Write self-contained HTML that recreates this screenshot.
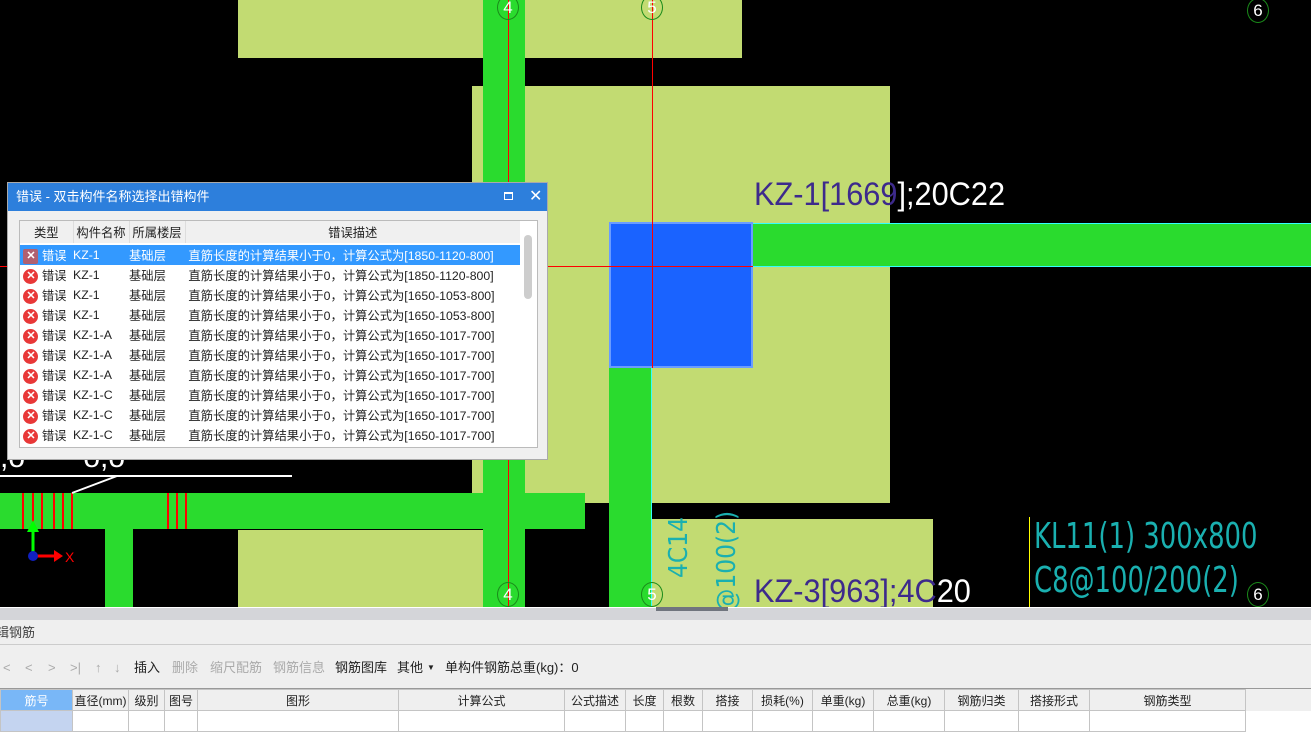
<!DOCTYPE html>
<html><head><meta charset="utf-8"><style>
*{margin:0;padding:0;box-sizing:border-box}
body{width:1311px;height:750px;overflow:hidden;background:#fff;position:relative;font-family:"Liberation Sans","Noto Sans CJK SC",sans-serif;font-size:12px;color:#222}
.a{position:absolute}
.pale{background:#c2db72}
.grn{background:#2adb2e}
.circ{position:absolute;width:22px;height:25px;border:1px solid #1a8a1a;border-radius:50%;color:#fff;font-size:17px;text-align:center;line-height:23px}
.cad{font-family:"DejaVu Sans Condensed","Liberation Sans",sans-serif}
table{border-collapse:collapse}
.dlg td{height:20px;white-space:nowrap;font-size:12.3px;padding:0}
.x{display:inline-block;width:15px;height:15px;border-radius:50%;background:#e83838;color:#fff;font-size:11px;line-height:15px;text-align:center;font-weight:bold;vertical-align:middle}
.bt th,.bt td{border:1px solid #c4c4c4;font-weight:normal;font-size:12px;height:21px}
.bt th{background:#efefef}
.tb{position:absolute;top:0;line-height:46px;font-size:13px;white-space:nowrap}
.g{color:#aaa}
</style></head><body>
<div class="a" style="left:0;top:0;width:1311px;height:607px;background:#000;overflow:hidden">
 <div class="a pale" style="left:238px;top:0;width:504px;height:58px"></div>
 <div class="a pale" style="left:472px;top:86px;width:418px;height:417px"></div>
 <div class="a pale" style="left:652px;top:519px;width:281px;height:88px"></div>
 <div class="a pale" style="left:238px;top:530px;width:245px;height:77px"></div>
 <div class="a grn" style="left:483px;top:0;width:42px;height:607px"></div>
 <div class="a grn" style="left:0;top:493px;width:585px;height:36px"></div>
 <div class="a grn" style="left:105px;top:529px;width:28px;height:78px"></div>
 <div class="a grn" style="left:609px;top:368px;width:43px;height:239px;border-right:1px solid #3ff"></div>
 <div class="a grn" style="left:753px;top:223px;width:558px;height:44px;border-top:1px solid #3ff;border-bottom:1px solid #3ff"></div>
 <div class="a" style="left:609px;top:222px;width:144px;height:146px;background:#1a63ff;border:2px solid #6a9cff"></div>
 <div class="a" style="left:508px;top:0;width:1px;height:607px;background:#f00"></div>
 <div class="a" style="left:652px;top:0;width:1px;height:368px;background:#f00"></div>
 <div class="a" style="left:0;top:266px;width:753px;height:1px;background:#f00"></div>
 <div class="a" style="left:22px;top:493px;width:2px;height:36px;background:#f00"></div>
 <div class="a" style="left:32px;top:493px;width:2px;height:36px;background:#f00"></div>
 <div class="a" style="left:41px;top:493px;width:2px;height:36px;background:#f00"></div>
 <div class="a" style="left:53px;top:493px;width:2px;height:36px;background:#f00"></div>
 <div class="a" style="left:62px;top:493px;width:2px;height:36px;background:#f00"></div>
 <div class="a" style="left:71px;top:493px;width:2px;height:36px;background:#f00"></div>
 <div class="a" style="left:167px;top:493px;width:2px;height:36px;background:#f00"></div>
 <div class="a" style="left:176px;top:493px;width:2px;height:36px;background:#f00"></div>
 <div class="a" style="left:185px;top:493px;width:2px;height:36px;background:#f00"></div>
 <svg class="a" style="left:0;top:440px" width="320" height="140">
  <path d="M0 36H292M117 36L72 53" stroke="#fff" stroke-width="2" fill="none"/>
  <path d="M33 116V88" stroke="#0f0" stroke-width="3"/><path d="M27 92L33 80L39 92Z" fill="#0f0"/>
  <path d="M33 116H56" stroke="#f00" stroke-width="3"/><path d="M54 110L63 116L54 122Z" fill="#f00"/>
  <circle cx="33" cy="116" r="5" fill="#1020c0"/>
  <text x="65" y="122" fill="#f00" font-size="14" font-family="Liberation Sans">X</text>
 </svg>
 <div class="a" style="left:1029px;top:517px;width:1px;height:90px;background:#ff0"></div>
 <div class="a cad" style="left:1034px;top:515px;color:#1ab0b0;font-size:36px;line-height:44px;transform:scaleX(0.8);transform-origin:left;white-space:nowrap;font-weight:200">KL11(1) 300x800<br>C8@100/200(2)</div>
 <div class="a cad" style="left:664px;top:578px;color:#1ab0b0;font-size:26px;transform:rotate(-90deg);transform-origin:left top;white-space:nowrap">4C14</div>
 <div class="a cad" style="left:712px;top:612px;color:#1ab0b0;font-size:26px;transform:rotate(-90deg);transform-origin:left top;white-space:nowrap">@100(2)</div>
 <div class="a" style="left:754px;top:176px;font-size:32px;transform:scaleX(0.96);transform-origin:left;white-space:nowrap;color:#fff"><span style="color:#3d2a8c">KZ-1[1669</span>];20C22</div>
 <div class="a" style="left:754px;top:573px;font-size:32px;transform:scaleX(0.96);transform-origin:left;white-space:nowrap;color:#fff"><span style="color:#3d2a8c">KZ-3[963];4C</span>20</div>
 <div class="circ" style="left:497px;top:-5px">4</div>
 <div class="circ" style="left:641px;top:-5px">5</div>
 <div class="circ" style="left:1247px;top:-2px">6</div>
 <div class="circ" style="left:497px;top:582px">4</div>
 <div class="circ" style="left:641px;top:582px">5</div>
 <div class="circ" style="left:1247px;top:582px">6</div>
 <div class="a" style="left:0;top:443px;font-size:30px;color:#fff;line-height:30px">,o&nbsp;&nbsp;&nbsp;&nbsp;&nbsp;&nbsp;&nbsp;o,o</div>
</div>
<!-- dialog -->
<div class="a" style="left:7px;top:182px;width:541px;height:278px;background:#f0f0f0;border:1px solid #aaa">
 <div style="height:28px;background:#2d7fdc;color:#fff;font-size:13px;line-height:28px;padding-left:8px">错误 - 双击构件名称选择出错构件
  <span class="a" style="left:496px;top:9px;width:9px;height:8px;border:1px solid #fff;border-top-width:2px"></span>
  <span class="a" style="left:521px;top:0;font-size:16px">✕</span></div>
 <div class="a" style="left:11px;top:37px;width:519px;height:228px;background:#fff;border:1px solid #bbb;overflow:hidden">
  <table class="dlg" style="width:500px">
   <tr style="background:#f0f0f0"><td style="width:53px;text-align:center;height:22px;border-right:1px solid #ddd">类型</td><td style="width:56px;text-align:center;border-right:1px solid #ddd">构件名称</td><td style="width:56px;text-align:center;border-right:1px solid #ddd">所属楼层</td><td style="text-align:center">错误描述</td></tr>
   <tr><td colspan="4" style="height:2px"></td></tr>
   <tr style="background:#3399ff;color:#fff"><td>&nbsp;<span class="x" style="background:#b06070;border-radius:2px">✕</span> 错误</td><td>KZ-1</td><td>基础层</td><td>&nbsp;直筋长度的计算结果小于0，计算公式为[1850-1120-800]</td></tr>
   <tr><td>&nbsp;<span class="x">✕</span> 错误</td><td>KZ-1</td><td>基础层</td><td>&nbsp;直筋长度的计算结果小于0，计算公式为[1850-1120-800]</td></tr>
   <tr><td>&nbsp;<span class="x">✕</span> 错误</td><td>KZ-1</td><td>基础层</td><td>&nbsp;直筋长度的计算结果小于0，计算公式为[1650-1053-800]</td></tr>
   <tr><td>&nbsp;<span class="x">✕</span> 错误</td><td>KZ-1</td><td>基础层</td><td>&nbsp;直筋长度的计算结果小于0，计算公式为[1650-1053-800]</td></tr>
   <tr><td>&nbsp;<span class="x">✕</span> 错误</td><td>KZ-1-A</td><td>基础层</td><td>&nbsp;直筋长度的计算结果小于0，计算公式为[1650-1017-700]</td></tr>
   <tr><td>&nbsp;<span class="x">✕</span> 错误</td><td>KZ-1-A</td><td>基础层</td><td>&nbsp;直筋长度的计算结果小于0，计算公式为[1650-1017-700]</td></tr>
   <tr><td>&nbsp;<span class="x">✕</span> 错误</td><td>KZ-1-A</td><td>基础层</td><td>&nbsp;直筋长度的计算结果小于0，计算公式为[1650-1017-700]</td></tr>
   <tr><td>&nbsp;<span class="x">✕</span> 错误</td><td>KZ-1-C</td><td>基础层</td><td>&nbsp;直筋长度的计算结果小于0，计算公式为[1650-1017-700]</td></tr>
   <tr><td>&nbsp;<span class="x">✕</span> 错误</td><td>KZ-1-C</td><td>基础层</td><td>&nbsp;直筋长度的计算结果小于0，计算公式为[1650-1017-700]</td></tr>
   <tr><td>&nbsp;<span class="x">✕</span> 错误</td><td>KZ-1-C</td><td>基础层</td><td>&nbsp;直筋长度的计算结果小于0，计算公式为[1650-1017-700]</td></tr>
  </table>
  <div class="a" style="left:504px;top:14px;width:8px;height:64px;background:#cdcdcd;border-radius:4px"></div>
 </div>
</div>
<!-- bottom -->
<div class="a" style="left:0;top:608px;width:1311px;height:12px;background:#d4d5d9"></div>
<div class="a" style="left:656px;top:607px;width:72px;height:4px;background:#70757e"></div>
<div class="a" style="left:0;top:620px;width:1311px;height:25px;background:#efefef;border-bottom:1px solid #ccc;font-size:13px;line-height:26px;color:#444;text-indent:-4px">辑钢筋</div>
<div class="a" style="left:0;top:645px;width:1311px;height:44px;background:#efefef;border-bottom:1px solid #999">
 <span class="tb g" style="left:3px">&lt;</span><span class="tb g" style="left:25px">&lt;</span><span class="tb g" style="left:48px">&gt;</span><span class="tb g" style="left:70px">&gt;|</span>
 <span class="tb g" style="left:95px">↑</span><span class="tb g" style="left:114px">↓</span>
 <span class="tb" style="left:134px">插入</span><span class="tb g" style="left:172px">删除</span><span class="tb g" style="left:210px">缩尺配筋</span><span class="tb g" style="left:273px">钢筋信息</span>
 <span class="tb" style="left:335px">钢筋图库</span><span class="tb" style="left:397px">其他</span><span class="tb" style="left:427px;font-size:8px">▼</span>
 <span class="tb" style="left:445px">单构件钢筋总重(kg)：0</span>
</div>
<table class="a bt" style="left:0;top:689px;width:1246px;table-layout:fixed">
 <colgroup><col style="width:72px"><col style="width:56px"><col style="width:36px"><col style="width:33px"><col style="width:201px"><col style="width:166px"><col style="width:61px"><col style="width:38px"><col style="width:39px"><col style="width:50px"><col style="width:60px"><col style="width:61px"><col style="width:71px"><col style="width:74px"><col style="width:71px"><col style="width:156px"></colgroup>
 <tr><th style="background:#79b7f7;color:#fff">筋号</th><th>直径(mm)</th><th>级别</th><th>图号</th><th>图形</th><th>计算公式</th><th>公式描述</th><th>长度</th><th>根数</th><th>搭接</th><th>损耗(%)</th><th>单重(kg)</th><th>总重(kg)</th><th>钢筋归类</th><th>搭接形式</th><th>钢筋类型</th></tr>
 <tr><td style="background:#c4d4f0"></td><td></td><td></td><td></td><td></td><td></td><td></td><td></td><td></td><td></td><td></td><td></td><td></td><td></td><td></td><td></td></tr>
</table>
<div class="a" style="left:1246px;top:689px;width:65px;height:22px;background:#efefef"></div>
</body></html>
